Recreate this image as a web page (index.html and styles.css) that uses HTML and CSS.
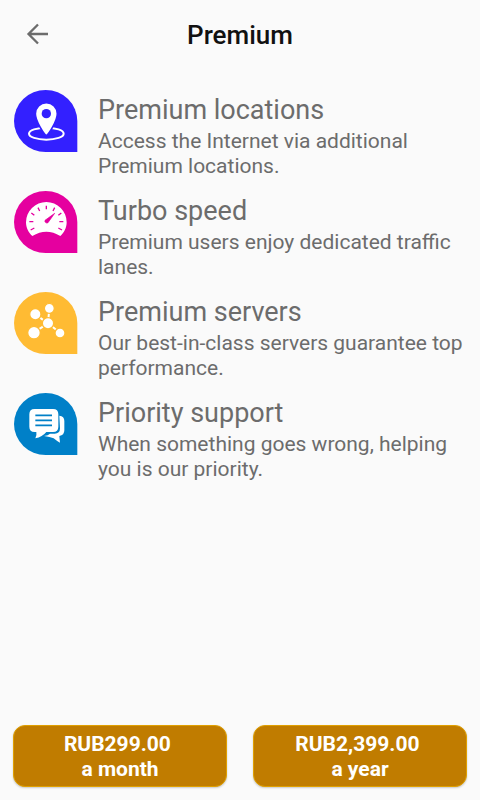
FILE: index.html
```html
<!DOCTYPE html>
<html lang="en">
<head>
<meta charset="utf-8">
<meta name="viewport" content="width=device-width, initial-scale=1">
<title>Premium</title>
<link rel="stylesheet" href="styles.css">
</head>
<body>
<header class="bar">
  <button class="back" type="button" aria-label="Back">
    <svg width="24" height="24" viewBox="0 0 24 24" fill="none" stroke="currentColor" stroke-width="2.300"><path d="M22 11H3M12 1.500L2.500 11l9.500 9.500"/></svg>
  </button>
  <h1 class="title">Premium</h1>
</header>
<main class="features">
  <section class="feature">
    <svg class="icon locations" viewBox="0 0 192 186" aria-hidden="true">
      <path fill="currentColor" d="M190 186H95A95 93 0 1 1 190 93Z"/>
      <ellipse cx="97" cy="131" rx="52" ry="18" fill="none" stroke="#fff" stroke-width="6"/>
      <path d="M97 137C90 132 64 93 64 71a33 33 0 0 1 66 0C130 93 104 132 97 137Z" fill="#fff" stroke="currentColor" stroke-width="5"/>
      <circle cx="97" cy="71" r="14" fill="currentColor"/>
    </svg>
    <div class="text">
      <h2 class="name">Premium locations</h2>
      <p class="about">Access the Internet via additional Premium locations.</p>
    </div>
  </section>
  <section class="feature">
    <svg class="icon speed" viewBox="0 0 192 186" aria-hidden="true">
      <path fill="currentColor" d="M190 186H95A95 93 0 1 1 190 93Z"/>
      <path d="M55 135C44 126 36 110 36 94a61 61 0 0 1 122 0C158 110 150 126 139 135Q118 122 97 122T55 135Z" fill="#fff"/>
      <g fill="none" stroke="currentColor" stroke-width="4">
        <path d="M97 44v11M72 50l5 10M122 50l-5 10M52 66l9 7M142 66l-9 7M46 92h12M148 92h-12M50 117l11-6M144 117l-11-6"/>
      </g>
      <path d="M122 67L102 95a6 6 0 0 1-9-7Z" fill="currentColor" stroke="currentColor" stroke-width="2"/>
    </svg>
    <div class="text">
      <h2 class="name">Turbo speed</h2>
      <p class="about">Premium users enjoy dedicated traffic lanes.</p>
    </div>
  </section>
  <section class="feature">
    <svg class="icon servers" viewBox="0 0 192 186" aria-hidden="true">
      <path fill="currentColor" d="M190 186H95A95 93 0 1 1 190 93Z"/>
      <path d="M102 94L64 67M102 94L106 49M102 94L60 121M102 94L138 122" stroke="#fff" stroke-width="6"/>
      <g fill="#fff" stroke="currentColor" stroke-width="4">
        <circle cx="102" cy="94" r="17"/>
        <circle cx="64" cy="67" r="17"/>
        <circle cx="106" cy="49" r="15"/>
        <circle cx="60" cy="122" r="19"/>
        <circle cx="138" cy="123" r="15"/>
      </g>
    </svg>
    <div class="text">
      <h2 class="name">Premium servers</h2>
      <p class="about">Our best-in-class servers guarantee top performance.</p>
    </div>
  </section>
  <section class="feature">
    <svg class="icon support" viewBox="0 0 192 186" aria-hidden="true">
      <path fill="currentColor" d="M190 186H95A95 93 0 1 1 190 93Z"/>
      <path d="M136 68Q151 69 151 84v28Q151 127 136 129L138 149Q128 144 119 136Q108 132 90 129Q103 128 108 122H122Q138 122 138 106Z" fill="#fff"/>
      <path d="M62 48h55q16 0 16 16v37q0 16-16 16H97Q85 132 64 136Q69 127 67 117H62q-16 0-16-16V64q0-16 16-16Z" fill="#fff"/>
      <path d="M64 67h50M64 82h50M64 97h50" stroke="currentColor" stroke-width="5"/>
    </svg>
    <div class="text">
      <h2 class="name">Priority support</h2>
      <p class="about">When something goes wrong, helping you is our priority.</p>
    </div>
  </section>
</main>
<footer class="plans">
  <button class="plan" type="button">RUB299.00&nbsp;<span class="period">a month</span></button>
  <button class="plan" type="button">RUB2,399.00&nbsp;<span class="period">a year</span></button>
</footer>
</body>
</html>
```
FILE: styles.css
```css
* {
  box-sizing: border-box;
}

body {
  margin: 0;
  min-height: 100vh;
  display: flex;
  flex-direction: column;
  background: #fafafa;
  color: #6c6c6c;
  font-family: Roboto, "Liberation Sans", sans-serif;
}

h1,
h2,
p {
  margin: 0;
}

button {
  border: 0;
  font-family: inherit;
}

.bar {
  display: grid;
  grid-template-columns: 48px 1fr 48px;
  align-items: center;
  height: 70px;
  padding: 0 14px;
}

.back {
  display: flex;
  align-items: center;
  justify-content: center;
  height: 48px;
  padding: 0;
  background: none;
  color: #6c6c6c;
}

.title {
  color: #111;
  font-size: 26px;
  font-weight: 500;
  line-height: 32px;
  text-align: center;
}

.features {
  flex: 1;
  display: flex;
  flex-direction: column;
  gap: 12px;
  padding: 20px 12px 20px 14px;
}

.feature {
  display: flex;
  align-items: flex-start;
  gap: 20px;
}

.icon {
  flex: none;
  width: 64px;
  height: 62px;
}

.locations {
  color: #3320ff;
}

.speed {
  color: #e5009f;
}

.servers {
  color: #ffbb33;
}

.support {
  color: #0080c8;
}

.text {
  padding-top: 3px;
}

.name {
  font-size: 27px;
  font-weight: 400;
  line-height: 34px;
}

.about {
  padding-top: 2px;
  font-size: 21px;
  line-height: 25px;
}

.plans {
  display: grid;
  grid-template-columns: 1fr 1fr;
  gap: 26px;
  padding: 0 13px 13px;
}

.plan {
  height: 62px;
  padding: 2px 0 0;
  border: 1px solid #e0a000;
  border-radius: 12px;
  background: #c07c00;
  box-shadow: 0 1px 2px #0003;
  color: #fff;
  font-size: 21px;
  font-weight: 700;
  line-height: 25px;
}

.period {
  display: block;
}
```
